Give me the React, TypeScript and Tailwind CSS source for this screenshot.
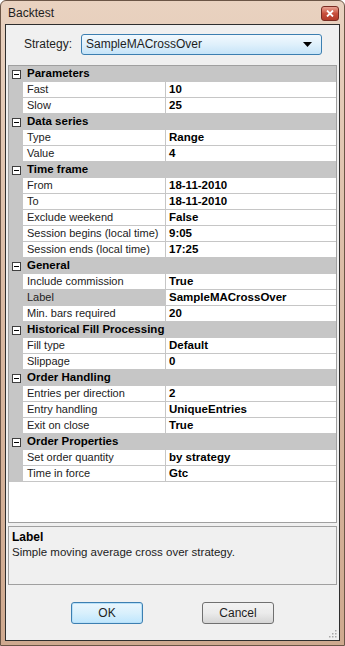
import React from "react";

type Row = { name: string; value: string; selected?: boolean };
type Category = { title: string; rows: Row[] };

const categories: Category[] = [
  { title: "Parameters", rows: [{ name: "Fast", value: "10" }, { name: "Slow", value: "25" }] },
  { title: "Data series", rows: [{ name: "Type", value: "Range" }, { name: "Value", value: "4" }] },
  {
    title: "Time frame",
    rows: [
      { name: "From", value: "18-11-2010" },
      { name: "To", value: "18-11-2010" },
      { name: "Exclude weekend", value: "False" },
      { name: "Session begins (local time)", value: "9:05" },
      { name: "Session ends (local time)", value: "17:25" },
    ],
  },
  {
    title: "General",
    rows: [
      { name: "Include commission", value: "True" },
      { name: "Label", value: "SampleMACrossOver", selected: true },
      { name: "Min. bars required", value: "20" },
    ],
  },
  {
    title: "Historical Fill Processing",
    rows: [
      { name: "Fill type", value: "Default" },
      { name: "Slippage", value: "0" },
    ],
  },
  {
    title: "Order Handling",
    rows: [
      { name: "Entries per direction", value: "2" },
      { name: "Entry handling", value: "UniqueEntries" },
      { name: "Exit on close", value: "True" },
    ],
  },
  {
    title: "Order Properties",
    rows: [
      { name: "Set order quantity", value: "by strategy" },
      { name: "Time in force", value: "Gtc" },
    ],
  },
];

function MinusBox() {
  return (
    <svg width="9" height="9" viewBox="0 0 9 9" className="block">
      <rect x="0.5" y="0.5" width="8" height="8" fill="#fff" stroke="#404040" />
      <line x1="2" y1="4.5" x2="7" y2="4.5" stroke="#000" />
    </svg>
  );
}

function CategoryRow({ title }: { title: string }) {
  return (
    <div className="flex h-[16px] bg-[#c6c6c6] items-center">
      <div className="w-[14px] flex justify-center pl-[1px]">
        <MinusBox />
      </div>
      <span className="pl-[4px] font-bold text-[11.5px] text-black leading-none whitespace-nowrap">{title}</span>
    </div>
  );
}

function PropRow({ row }: { row: Row }) {
  return (
    <div className="flex h-[16px] bg-[#c6c6c6]">
      <div className="w-[14px]" />
      <div
        className={`w-[142px] border-b border-[#c6c6c6] pl-[4px] flex items-center text-[11px] text-[#222] leading-none whitespace-nowrap overflow-hidden ${
          row.selected ? "bg-[#c6c6c6]" : "bg-white"
        }`}
      >
        {row.name}
      </div>
      <div className="w-px bg-[#c6c6c6]" />
      <div className="flex-1 bg-white border-b border-[#c6c6c6] pl-[3px] flex items-center font-bold text-[11.5px] text-black leading-none whitespace-nowrap">
        {row.value}
      </div>
    </div>
  );
}

export default function App() {
  return (
    <div
      className="w-[345px] h-[646px] flex flex-col rounded-t-[6px] border border-[#6b5546] bg-gradient-to-b from-[#e9d2c0] via-[#d9b8a1] to-[#cfa98f] text-[12px]"
      style={{ fontFamily: "'Liberation Sans', Arial, sans-serif" }}
    >
      <div className="h-[23px] flex items-center justify-between pl-[7px] pr-[5px]">
        <span className="text-[12px] text-[#1e1e1e] pt-[1px]">Backtest</span>
        <div className="w-[18px] h-[15px] mt-[2px] rounded-[3px] border border-[#7a2c22] bg-gradient-to-b from-[#e8a293] via-[#c8503c] to-[#b23a28] flex items-center justify-center">
          <svg width="8" height="7" viewBox="0 0 8 7">
            <path d="M1 0.5 L7 6.5 M7 0.5 L1 6.5" stroke="#fff" strokeWidth="1.8" />
          </svg>
        </div>
      </div>

      <div className="flex-1 mx-[4px] mb-[4px] border border-[#2e2e2e] bg-[#f0f0f0] flex flex-col">
        <div className="flex items-center h-[20px] mt-[9px] pl-[18px]">
          <span className="w-[57px] text-[#1e1e1e]">Strategy:</span>
          <div className="w-[241px] h-[21px] rounded-[3px] border border-[#3c7fb1] bg-gradient-to-b from-[#f2f9fe] via-[#dff0fb] to-[#c6e4f8] flex items-center justify-between pl-[4px] pr-[9px]">
            <span className="text-[#1e1e1e]">SampleMACrossOver</span>
            <svg width="9" height="5" viewBox="0 0 9 5">
              <path d="M0 0 L9 0 L4.5 5 Z" fill="#000" />
            </svg>
          </div>
        </div>

        <div className="mt-[11px] mx-[2px] h-[458px] border border-[#a0a0a0] bg-white flex flex-col">
          {categories.map((c) => (
            <div key={c.title}>
              <CategoryRow title={c.title} />
              {c.rows.map((r) => (
                <PropRow key={r.name} row={r} />
              ))}
            </div>
          ))}
          <div className="flex-1 bg-white" />
        </div>

        <div className="mt-[3px] mx-[2px] h-[59px] border border-[#a0a0a0] bg-[#f0f0f0] px-[3px] pt-[3px]">
          <div className="font-bold text-black leading-[15px]">Label</div>
          <div className="text-[11.5px] text-[#222] leading-[15px]">Simple moving average cross over strategy.</div>
        </div>

        <div className="flex-1 relative flex justify-center gap-[59px] pt-[17px]">
          <button className="w-[72px] h-[22px] rounded-[3px] border border-[#3c7fb1] bg-gradient-to-b from-[#eaf6fd] via-[#d9f0fc] to-[#bee6fd] text-[#1e1e1e] shadow-[inset_0_0_0_1px_#b8e0f8]">
            OK
          </button>
          <button className="w-[72px] h-[22px] rounded-[3px] border border-[#707070] bg-gradient-to-b from-[#f2f2f2] via-[#ebebeb] to-[#d5d5d5] text-[#1e1e1e]">
            Cancel
          </button>
          <svg width="10" height="10" viewBox="0 0 10 10" className="absolute right-[2px] bottom-[2px]">
            {[
              [8, 2],
              [5, 5],
              [8, 5],
              [2, 8],
              [5, 8],
              [8, 8],
            ].map(([x, y], i) => (
              <rect key={i} x={x} y={y} width="1.5" height="1.5" fill="#a8a8a8" />
            ))}
          </svg>
        </div>
      </div>
    </div>
  );
}
